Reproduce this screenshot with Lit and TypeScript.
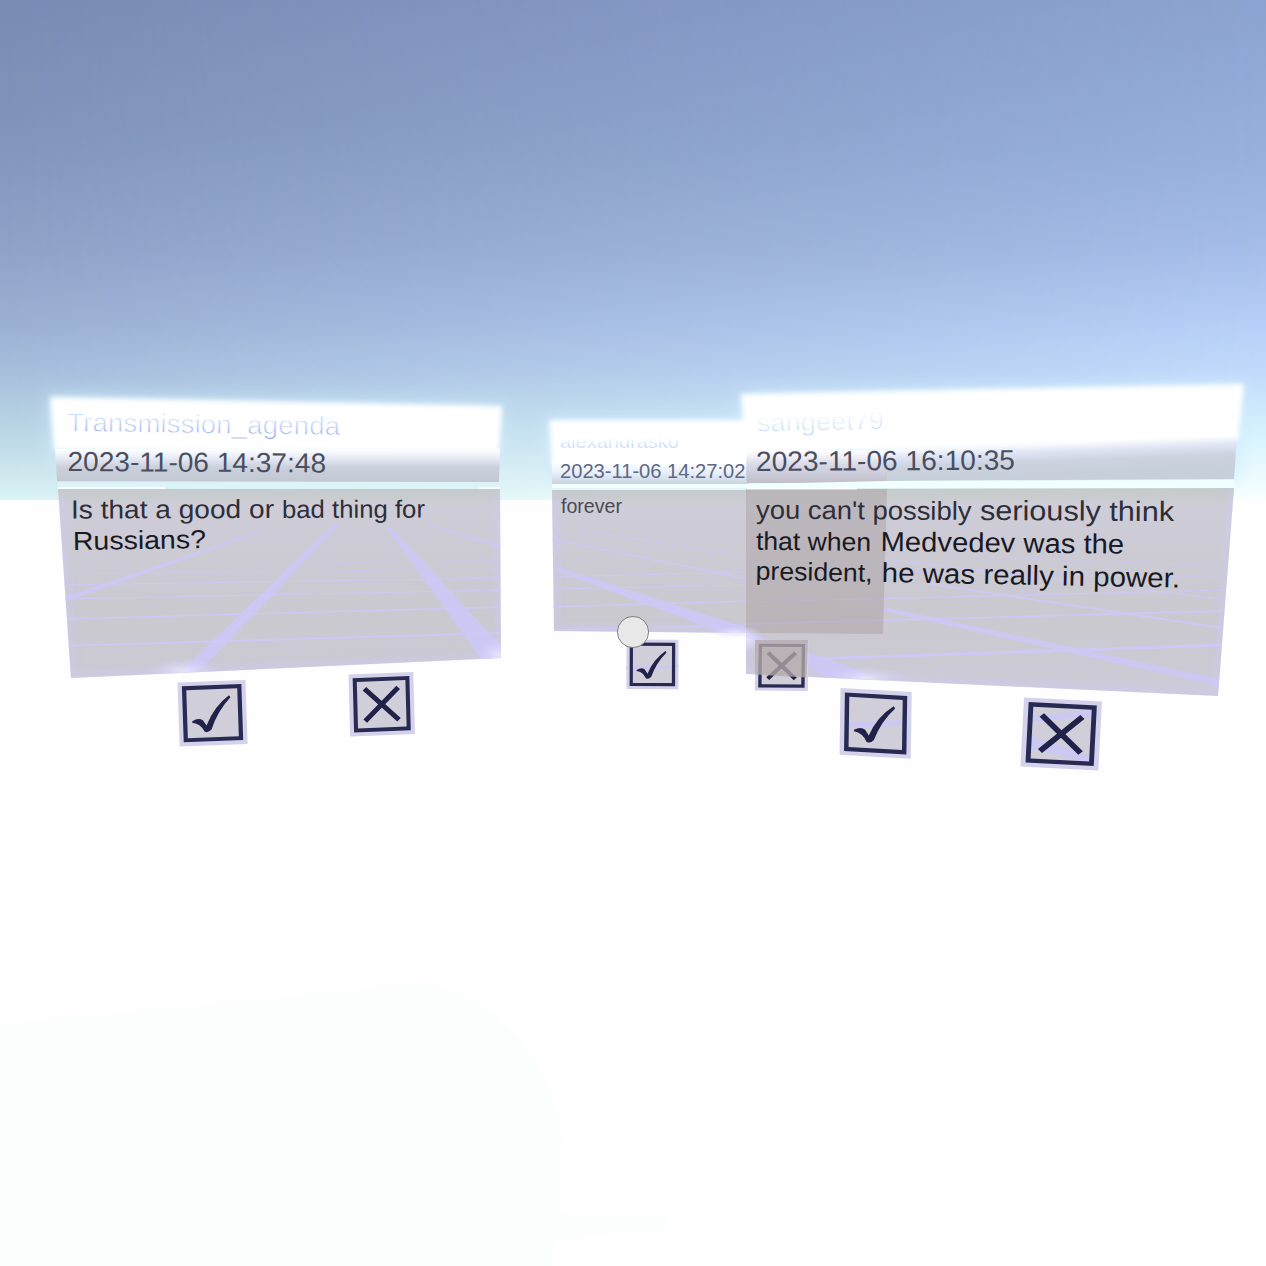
import { LitElement, html, svg, css } from "lit";
import { customElement } from "lit/decorators.js";

type Pt = [number, number];
/* Text run, start x and end x relative to the line origin, font size. */
type Run = [string, number, number, number];

const line = (text: string, a: Pt, b: Pt, size: number, cls: string) => {
  const dx = b[0] - a[0];
  const dy = b[1] - a[1];
  const angle = (Math.atan2(dy, dx) * 180) / Math.PI;
  return svg`<text class=${cls} font-size=${size} textLength=${Math.hypot(dx, dy)}
    lengthAdjust="spacingAndGlyphs"
    transform="translate(${a[0]} ${a[1]}) rotate(${angle})">${text}</text>`;
};

const runs = (a: Pt, angle: number, cls: string, parts: Run[]) => svg`
  <text class=${cls} transform="translate(${a[0]} ${a[1]}) rotate(${angle})">${parts.map(
    ([text, from, to, size]) => svg`<tspan x=${from} font-size=${size} textLength=${to - from}
      lengthAdjust="spacingAndGlyphs">${text}</tspan> `
  )}</text>`;

const TICK = "M19 59 Q28 53 34 58 L39 66 Q50 38 72 22 L74 25 Q55 45 46 72 Q41 78 36 75 Q31 63 19 61Z";

/* Buttons are drawn on a 96-unit square and placed by an affine matrix;
   the streak is the floor grid showing through the face. */
const button = (kind: "tick" | "cross", m: string, streak = "") => svg`
  <g transform="matrix(${m})">
    <rect class="pad" width="96" height="96"></rect>
    <rect class="face" x="9" y="9" width="78" height="78"></rect>
    <path class="streak" d=${streak}></path>
    <rect class="frame" x="9" y="9" width="78" height="78"></rect>
    ${kind === "tick"
      ? svg`<path class="ink" d=${TICK}></path>`
      : svg`<path class="stroke" d="M23 23 L73 73 M73 23 L23 73"></path>`}
  </g>`;

@customElement("app-root")
export class AppRoot extends LitElement {
  static styles = css`
    :host { display: block; width: 1266px; height: 1266px; overflow: hidden; background: #fefefe; }
    .scene { display: block; font-family: "Liberation Sans", Arial, sans-serif; }
    .date { fill: #4a4e61; }
    .date.far { fill: #5f6784; }
    .body { fill: #2e2e38; }
    .low { fill: #191923; }
    .far-body { fill: #4a4a54; }
    .name-left { fill: url(#nameL); stroke: #fff; stroke-width: .6; }
    .name-right { fill: url(#nameR); stroke: #fff; stroke-width: .7; }
    .name-far { fill: url(#nameC); stroke: #fff; stroke-width: .4; }
    .grid { fill: #cdc8f3; }
    .wire { stroke: #cdc8f6; fill: none; }
    .pad { fill: #d4d2ea; }
    .face { fill: #d0ced8; }
    .streak { fill: #cbc8f2; }
    .frame { fill: none; stroke: #282a54; stroke-width: 6; }
    .ink { fill: #20224a; }
    .stroke { stroke: #20224a; stroke-width: 7.5; }
  `;

  render() {
    return html`
      <svg class="scene" width="1266" height="1266" viewBox="0 0 1266 1266">
        <defs>
          <linearGradient id="sky" x1="0" y1="0" x2="0" y2="500" gradientUnits="userSpaceOnUse">
            <stop offset="0" stop-color="#798bb5"></stop>
            <stop offset=".25" stop-color="#8094bb"></stop>
            <stop offset=".5" stop-color="#8fa3c8"></stop>
            <stop offset=".65" stop-color="#9bb1d3"></stop>
            <stop offset=".75" stop-color="#a8c0dc"></stop>
            <stop offset=".87" stop-color="#bcd7e7"></stop>
            <stop offset="1" stop-color="#daf3f5"></stop>
          </linearGradient>
          <linearGradient id="skyRight" x1="0" y1="0" x2="0" y2="500" gradientUnits="userSpaceOnUse">
            <stop offset="0" stop-color="#8ca3d0"></stop>
            <stop offset=".3" stop-color="#97b0dc"></stop>
            <stop offset=".5" stop-color="#a5bde8"></stop>
            <stop offset=".65" stop-color="#b7cff8"></stop>
            <stop offset=".75" stop-color="#c2dbfb"></stop>
            <stop offset=".87" stop-color="#d7f3fd"></stop>
            <stop offset="1" stop-color="#f8ffff"></stop>
          </linearGradient>
          <linearGradient id="across" x1="0" x2="1" y1="0" y2="0">
            <stop offset="0" stop-color="#000"></stop>
            <stop offset="1" stop-color="#fff"></stop>
          </linearGradient>
          <mask id="toRight"><rect width="1266" height="500" fill="url(#across)"></rect></mask>
          <linearGradient id="headL" x1="0" y1="449" x2="0" y2="482" gradientUnits="userSpaceOnUse">
            <stop offset="0" stop-color="#ffffff"></stop>
            <stop offset=".25" stop-color="#e8edf7"></stop>
            <stop offset=".55" stop-color="#cbd0dc"></stop>
            <stop offset="1" stop-color="#c2c8d1"></stop>
          </linearGradient>
          <linearGradient id="headC" x1="0" y1="462" x2="0" y2="484" gradientUnits="userSpaceOnUse">
            <stop offset="0" stop-color="#ffffff"></stop>
            <stop offset=".5" stop-color="#e6effb"></stop>
            <stop offset="1" stop-color="#c9d3df"></stop>
          </linearGradient>
          <linearGradient id="headR" x1="850" y1="450" x2="851.2" y2="481" gradientUnits="userSpaceOnUse">
            <stop offset="0" stop-color="#ffffff"></stop>
            <stop offset=".3" stop-color="#dfe5f4"></stop>
            <stop offset=".6" stop-color="#cdd3e0"></stop>
            <stop offset="1" stop-color="#c7d0da"></stop>
          </linearGradient>
          <linearGradient id="headO" x1="0" y1="451" x2="0" y2="484" gradientUnits="userSpaceOnUse">
            <stop offset="0" stop-color="#ffffff"></stop>
            <stop offset=".45" stop-color="#d6d6e6"></stop>
            <stop offset="1" stop-color="#bfbdc8"></stop>
          </linearGradient>
          <linearGradient id="panel" x1="0" y1="488" x2="0" y2="690" gradientUnits="userSpaceOnUse">
            <stop offset="0" stop-color="#c5cbcd"></stop>
            <stop offset=".05" stop-color="#c8cccf"></stop>
            <stop offset=".08" stop-color="#cecdd8"></stop>
            <stop offset=".6" stop-color="#cac9d0"></stop>
            <stop offset=".85" stop-color="#cbc9d2"></stop>
            <stop offset="1" stop-color="#cdcbd8"></stop>
          </linearGradient>
          <linearGradient id="nameL" x1="0" y1="-22" x2="0" y2="6" gradientUnits="userSpaceOnUse">
            <stop offset="0" stop-color="#d0e4fb"></stop>
            <stop offset=".45" stop-color="#c9daf9"></stop>
            <stop offset=".75" stop-color="#aebdf2"></stop>
            <stop offset="1" stop-color="#8a9ae4"></stop>
          </linearGradient>
          <linearGradient id="nameR" x1="0" y1="-17" x2="0" y2="7" gradientUnits="userSpaceOnUse">
            <stop offset="0" stop-color="#fbfeff"></stop>
            <stop offset=".4" stop-color="#dceefe"></stop>
            <stop offset=".75" stop-color="#c3d9fb"></stop>
            <stop offset="1" stop-color="#9db6f0"></stop>
          </linearGradient>
          <linearGradient id="nameC" x1="0" y1="-12" x2="0" y2="1" gradientUnits="userSpaceOnUse">
            <stop offset="0" stop-color="#ffffff"></stop>
            <stop offset=".3" stop-color="#f4faff"></stop>
            <stop offset="1" stop-color="#afc6f6"></stop>
          </linearGradient>
          <radialGradient id="spark">
            <stop offset="0" stop-color="#eceaff" stop-opacity=".8"></stop>
            <stop offset="1" stop-color="#d2ceff" stop-opacity="0"></stop>
          </radialGradient>
          <filter id="soft" x="-20%" y="-60%" width="140%" height="220%"><feGaussianBlur stdDeviation="2.6"></feGaussianBlur></filter>
          <filter id="halo" x="-20%" y="-80%" width="140%" height="260%"><feGaussianBlur stdDeviation="9"></feGaussianBlur></filter>
          <filter id="edge" x="-20%" y="-20%" width="140%" height="140%"><feGaussianBlur stdDeviation="5"></feGaussianBlur></filter>
          <clipPath id="cl"><path d="M58 489 H500 L501 658 L71 678Z"></path></clipPath>
          <clipPath id="cc"><path d="M552 490 H747 V633 L554 631Z"></path></clipPath>
          <clipPath id="cr"><path d="M746 489 L1234 488 L1218 696 L746 674Z"></path></clipPath>
          <clipPath id="above"><rect width="1266" height="500"></rect></clipPath>
        </defs>

        <rect width="1266" height="500" fill="url(#sky)"></rect>
        <rect width="1266" height="500" fill="url(#skyRight)" mask="url(#toRight)"></rect>
        <path d="M0 1025 Q220 1005 405 986 C490 982 552 1060 562 1140 L555 1214 L668 1219 V1228 L555 1238 L550 1266 H0Z" fill="#fbfefd"></path>

        <g clip-path="url(#above)">
          <g filter="url(#halo)" fill="#d0ecff" opacity=".85">
            <path d="M49 397 L502 406 L500 465 L55 465Z"></path>
            <path d="M547 420 H750 V480 H552Z"></path>
            <path d="M741 394 L1243 384 L1238 480 L745 470Z"></path>
          </g>
          <g filter="url(#soft)" fill="#fff">
            <path d="M50 397 L502 406 L499 452 L54 450Z"></path>
            <path d="M549 420 H750 V465 H552Z"></path>
            <path d="M741 394 L1244 384 L1238 440 L745 455Z"></path>
          </g>
        </g>

        <path d="M55 449 H500 L499 482 L57 481Z" fill="url(#headL)"></path>
        <path d="M552 461 H748 V484 H552Z" fill="url(#headC)"></path>
        <path d="M746 455 L1237 436 L1234 479 L886 481 H746Z" fill="url(#headR)"></path>
        <path d="M747 451 H887 V483 H747Z" fill="url(#headO)"></path>
        <path d="M57 482.5 H499 V488 H58Z" fill="#dcf4f8"></path>
        <path d="M552 484 H747 L887 481 L1234 480 V488 H552Z" fill="#f1ffff"></path>

        <path d="M58 489 H500 L501 658 L71 678Z" fill="url(#panel)"></path>
        <path d="M552 490 H747 V633 L554 631Z" fill="url(#panel)"></path>
        <path d="M746 489 L1234 488 L1218 696 L746 674Z" fill="url(#panel)"></path>

        <g clip-path="url(#cl)">
          <path class="grid" d="M334 524 L340 524 L203 668 L176 676Z M386 527 L391 527 L512 657 L482 660Z M64 597 L262 530 L265 531 L64 602Z M425 523 L502 545 V548 L424 524Z"></path>
          <path class="wire" d="M60 646 L505 633" stroke-width="2"></path>
          <path class="wire" d="M60 619 L505 607" stroke-width="1.6"></path>
          <path class="wire" d="M60 599 L505 590 M60 585 L505 578" stroke-width="1"></path>
          <path class="wire" d="M60 574 L505 569 M60 559 L170 541 M250 564 L505 560" stroke-width=".6"></path>
          <path d="M58 492 L71 678 L501 658 V492" fill="none" stroke="#cfcbff" stroke-width="5" opacity=".7" filter="url(#edge)"></path>
          <ellipse cx="183" cy="671" rx="38" ry="14" fill="url(#spark)"></ellipse>
          <ellipse cx="498" cy="655" rx="24" ry="18" fill="url(#spark)"></ellipse>
        </g>
        <g clip-path="url(#cc)">
          <path class="grid" d="M552 565 L747 628 V637 L720 632 L552 569Z"></path>
          <path class="wire" d="M552 539 L747 579" stroke-width="1.6"></path>
          <path class="wire" d="M552 607 L747 601 M552 630 L747 625" stroke-width="1.3"></path>
          <path class="wire" d="M552 589 L747 585 M552 577 L747 572 M580 530 L747 556" stroke-width=".9"></path>
          <path d="M553 495 V631 H747" fill="none" stroke="#cfcbff" stroke-width="5" opacity=".7" filter="url(#edge)"></path>
        </g>
        <g clip-path="url(#cr)">
          <path class="grid" d="M884 607 L1219 679 V686 L884 611Z M746 632 L846 665 L875 678 H830 L746 638Z"></path>
          <path class="wire" d="M808 659 L1222 645" stroke-width="3"></path>
          <path class="wire" d="M746 624 L1222 611 M930 584 L1222 628" stroke-width="1.8"></path>
          <path class="wire" d="M746 602 L1222 590 M884 559 L1222 599" stroke-width="1.2"></path>
          <path class="wire" d="M884 572 L1222 577 M990 557 L1222 566" stroke-width=".6"></path>
          <path d="M1234 490 L1218 696 L746 674 V636" fill="none" stroke="#cfcbff" stroke-width="5" opacity=".7" filter="url(#edge)"></path>
          <ellipse cx="865" cy="678" rx="42" ry="12" fill="url(#spark)"></ellipse>
          <path d="M746 489 H887 L883 634 L746 633Z" fill="#aca2a4" opacity=".5"></path>
          <ellipse cx="748" cy="640" rx="18" ry="14" fill="url(#spark)"></ellipse>
        </g>
        <ellipse cx="735" cy="632" rx="26" ry="6" fill="url(#spark)"></ellipse>
        <path d="M58 488 H165 M479 488 H500 M747 488.5 H857" stroke="#f8fbff" stroke-width="2"></path>

        ${line("Transmission_agenda", [67, 431], [340, 435], 26, "name-left")}
        ${line("2023-11-06 14:37:48", [67.5, 471], [326, 472.5], 27.5, "date")}
        ${runs([71, 518.5], -0.15, "body", [
          ["Is that a good or", 0, 203, 26],
          ["bad thing for", 211, 354, 25],
        ])}
        ${line("Russians?", [73, 550], [206, 548], 26, "low")}

        ${line("alexandrasko", [560, 447.5], [679, 447.5], 19, "name-far")}
        ${line("2023-11-06 14:27:02", [560, 477.5], [745.5, 477.5], 20, "date far")}
        ${line("forever", [561, 513], [622, 513], 19.5, "far-body")}

        ${line("sangeet79", [757, 431.5], [884, 429], 25, "name-right")}
        ${line("2023-11-06 16:10:35", [756, 471], [1015, 469.5], 28, "date")}
        ${runs([756, 518.7], 0.33, "body", [
          ["you can't possibly", 0, 215.5, 26],
          ["seriously think", 224, 418, 28],
        ])}
        ${runs([756, 549.7], 0.6, "low", [
          ["that when", 0, 115, 25.5],
          ["Medvedev was the", 124.5, 368, 27.5],
        ])}
        ${runs([755.5, 579.5], 1.1, "low", [
          ["president,", 0, 117, 25.5],
          ["he was really in power.", 126, 424.5, 27.5],
        ])}

        ${button("tick", ".708 -.027 .022 .667 177.5 682.5")}
        ${button("cross", ".675 -.027 .017 .646 348.5 674.5")}
        ${button("tick", ".542 .003 -.002 .516 626.5 639.5", "M0 53 L96 49 V54 L0 58Z")}
        ${button("cross", ".552 .004 -.007 .521 755.5 640.5")}
        <path d="M755 640 H808 L806.5 677.5 L755 674.5Z" fill="#b4aaaa" opacity=".78"></path>
        ${button("tick", ".742 .042 -.01 .696 840.5 688", "M10 49 L87 40 V49 L10 57Z")}
        ${button("cross", ".812 .042 -.037 .719 1024 697.5", "M12 24 L84 12 V22 L12 33Z M12 53 L84 76 V84 L70 84 L12 70Z")}

        <circle cx="633" cy="632" r="15.6" fill="#e8e8e8" stroke="#777" stroke-width=".9"></circle>
      </svg>
    `;
  }
}
